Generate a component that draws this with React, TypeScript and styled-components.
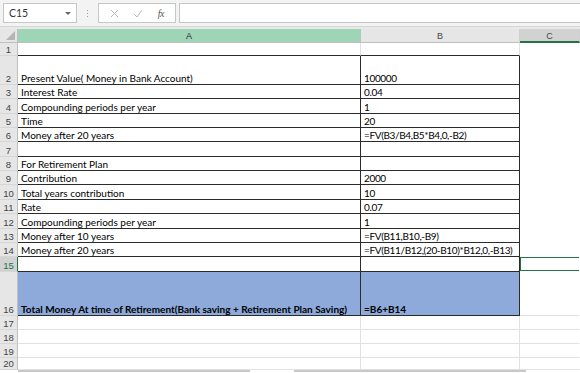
import * as React from 'react';
import { default as styled, createGlobalStyle } from 'styled-components';

const GlobalStyle = createGlobalStyle`
  html, body {
    margin: 0;
    padding: 0;
    background: #ffffff;
    overflow: hidden;
  }
  body {
    font-family: Lato, "Open Sans", sans-serif;
  }
`;

const Sheet = styled.div`
  width: 580px;
  height: 373px;
  overflow: hidden;
  background: #ffffff;
`;

const FormulaBar = styled.div`
  height: 27px;
  background: #f3f3f3;
  border-bottom: 1px solid #d5d5d5;
  display: flex;
  align-items: center;
  padding-left: 3px;
  box-sizing: border-box;
`;

const NameBox = styled.div`
  width: 74px;
  height: 20px;
  box-sizing: border-box;
  background: #ffffff;
  border: 1px solid #c6c6c6;
  display: flex;
  align-items: center;
  justify-content: space-between;
  padding: 0 5px 0 5px;
  font-size: 10.5px;
  color: #333333;
`;

const Caret = styled.span`
  width: 0;
  height: 0;
  border-left: 3px solid transparent;
  border-right: 3px solid transparent;
  border-top: 3px solid #666666;
`;

const Dots = styled.div`
  width: 21px;
  display: flex;
  flex-direction: column;
  align-items: center;
  gap: 2px;
  span {
    width: 1px;
    height: 1px;
    background: #a0a0a0;
  }
`;

const ButtonBox = styled.div`
  width: 78px;
  height: 20px;
  box-sizing: border-box;
  background: #ffffff;
  border: 1px solid #c6c6c6;
  display: flex;
  align-items: center;
  justify-content: space-around;
  padding: 0 4px;
`;

const Fx = styled.span`
  font-family: "Liberation Serif", serif;
  font-style: italic;
  font-size: 10px;
  color: #555555;
  letter-spacing: -0.5px;
`;

const FormulaInput = styled.div`
  flex: 1;
  height: 20px;
  margin-left: 3px;
  box-sizing: border-box;
  background: #ffffff;
  border: 1px solid #c6c6c6;
  border-right: none;
`;

const Gap = styled.div`
  height: 2px;
  background: #e9e9e9;
`;

const Grid = styled.div`
  display: grid;
  grid-template-columns: 18px 343px 159px 60px;
`;

const Corner = styled.div`
  height: 14px;
  box-sizing: border-box;
  background: #e6e6e6;
  border-right: 1px solid #bfbfbf;
  border-bottom: 1px solid #bfbfbf;
  display: flex;
  align-items: flex-end;
  justify-content: flex-end;
  padding: 0 2px 2px 0;
`;

const ColHead = styled.div<{ $tone: 'active' | 'plain' | 'current' }>`
  height: 14px;
  box-sizing: border-box;
  display: flex;
  align-items: center;
  justify-content: center;
  font-family: "Liberation Sans", sans-serif;
  font-size: 9px;
  color: ${p => (p.$tone === 'active' ? '#262626' : '#444444')};
  background: ${p =>
    p.$tone === 'active' ? '#9fd5b7' : p.$tone === 'current' ? '#d2d2d2' : '#e6e6e6'};
  border-right: 1px solid ${p => (p.$tone === 'active' ? '#9fd5b7' : '#d0d0d0')};
  border-bottom: ${p => (p.$tone === 'current' ? '2px solid #217346' : '1px solid #bfbfbf')};
  padding-top: ${p => (p.$tone === 'current' ? '1px' : '0')};
`;

const RowHead = styled.div<{ $h: number; $current?: boolean }>`
  height: ${p => p.$h}px;
  box-sizing: border-box;
  display: flex;
  align-items: flex-end;
  justify-content: center;
  padding-bottom: 0.5px;
  line-height: 1;
  font-family: "Liberation Sans", sans-serif;
  font-size: 9.5px;
  color: ${p => (p.$current ? '#217346' : '#444444')};
  background: ${p => (p.$current ? '#d2d2d2' : '#e6e6e6')};
  border-right: 1px solid ${p => (p.$current ? '#217346' : '#bfbfbf')};
  border-bottom: 1px solid #d6d6d6;
`;

type Edge = 'dark' | 'grid' | 'none';

const edgeColor = (e: Edge) => (e === 'dark' ? '#2b2b2b' : e === 'grid' ? '#e1e1e1' : 'transparent');

const Cell = styled.div<{
  $h: number;
  $bottom: Edge;
  $right: Edge;
  $fill?: string;
  $bold?: boolean;
  $tight?: boolean;
  $selected?: boolean;
}>`
  height: ${p => p.$h}px;
  box-sizing: border-box;
  display: flex;
  align-items: flex-end;
  padding: 0 0 1.5px 3px;
  line-height: 1;
  white-space: nowrap;
  overflow: visible;
  font-size: 10px;
  font-weight: ${p => (p.$bold ? 700 : 400)};
  letter-spacing: ${p => (p.$tight && !p.$bold ? '-0.35px' : '0')};
  color: #000000;
  background: ${p => p.$fill || '#ffffff'};
  border-bottom: 1px solid ${p => edgeColor(p.$bottom)};
  border-right: 1px solid ${p => edgeColor(p.$right)};
  box-shadow: ${p =>
    p.$selected ? 'inset 0 1px 0 #217346, inset 1px 0 0 #217346, inset 0 -1px 0 #217346' : 'none'};
`;

const Scrollbar = styled.div`
  display: flex;
  gap: 44px;
  padding-left: 18px;
  span {
    height: 2px;
    width: 232px;
    background: #c8c8c8;
  }
`;

interface RowData {
  n: number;
  h: number;
  a?: string;
  b?: string;
}

const rows: RowData[] = [
  { n: 1, h: 13 },
  { n: 2, h: 29, a: 'Present Value( Money in Bank Account)', b: '100000' },
  { n: 3, h: 14, a: 'Interest Rate', b: '0.04' },
  { n: 4, h: 15, a: 'Compounding periods per year', b: '1' },
  { n: 5, h: 14, a: 'Time', b: '20' },
  { n: 6, h: 14, a: 'Money after 20 years', b: '=FV(B3/B4,B5*B4,0,-B2)' },
  { n: 7, h: 15 },
  { n: 8, h: 14, a: 'For Retirement Plan' },
  { n: 9, h: 14, a: 'Contribution', b: '2000' },
  { n: 10, h: 15, a: 'Total years contribution', b: '10' },
  { n: 11, h: 14, a: 'Rate', b: '0.07' },
  { n: 12, h: 15, a: 'Compounding periods per year', b: '1' },
  { n: 13, h: 14, a: 'Money after 10 years', b: '=FV(B11,B10,-B9)' },
  { n: 14, h: 14, a: 'Money after 20 years', b: '=FV(B11/B12,(20-B10)*B12,0,-B13)' },
  { n: 15, h: 15 },
  { n: 16, h: 44, a: 'Total Money At time of Retirement(Bank saving + Retirement Plan Saving)', b: '=B6+B14' },
  { n: 17, h: 14 },
  { n: 18, h: 14 },
  { n: 19, h: 14 },
  { n: 20, h: 12 },
];

const CornerMark = () => (
  <svg width="9" height="9" viewBox="0 0 9 9">
    <polygon points="9,0 9,9 0,9" fill="#b4b4b4" />
  </svg>
);

const CancelIcon = () => (
  <svg width="9" height="9" viewBox="0 0 9 9">
    <path d="M1 1 L8 8 M8 1 L1 8" stroke="#b8b8b8" strokeWidth="1" fill="none" />
  </svg>
);

const EnterIcon = () => (
  <svg width="10" height="9" viewBox="0 0 10 9">
    <path d="M1 5 L4 8 L9 1" stroke="#b8b8b8" strokeWidth="1" fill="none" />
  </svg>
);

const App: React.FunctionComponent = () => (
  <Sheet>
    <GlobalStyle />
    <FormulaBar>
      <NameBox>
        C15
        <Caret />
      </NameBox>
      <Dots>
        <span />
        <span />
        <span />
      </Dots>
      <ButtonBox>
        <CancelIcon />
        <EnterIcon />
        <Fx>fx</Fx>
      </ButtonBox>
      <FormulaInput />
    </FormulaBar>
    <Gap />
    <Grid>
      <Corner>
        <CornerMark />
      </Corner>
      <ColHead $tone="active">A</ColHead>
      <ColHead $tone="plain">B</ColHead>
      <ColHead $tone="current">C</ColHead>
      {rows.map(r => {
        const inTable = r.n <= 16;
        const boxed = r.n >= 2 && r.n <= 16;
        const bottom: Edge = inTable ? 'dark' : 'grid';
        const fill = r.n === 16 ? '#8eaadb' : undefined;
        const bold = r.n === 16;
        const cBottom: Edge = r.n >= 16 ? 'grid' : 'none';
        return (
          <React.Fragment key={r.n}>
            <RowHead $h={r.h} $current={r.n === 15}>{r.n}</RowHead>
            <Cell $h={r.h} $bottom={bottom} $right={boxed ? 'dark' : 'grid'} $fill={fill} $bold={bold}>
              {r.a}
            </Cell>
            <Cell $h={r.h} $bottom={bottom} $right={boxed ? 'dark' : 'grid'} $fill={fill} $bold={bold} $tight>
              {r.b}
            </Cell>
            <Cell $h={r.h} $bottom={cBottom} $right="none" $selected={r.n === 15} />
          </React.Fragment>
        );
      })}
    </Grid>
    <Scrollbar>
      <span />
      <span />
    </Scrollbar>
  </Sheet>
);

export default App;
